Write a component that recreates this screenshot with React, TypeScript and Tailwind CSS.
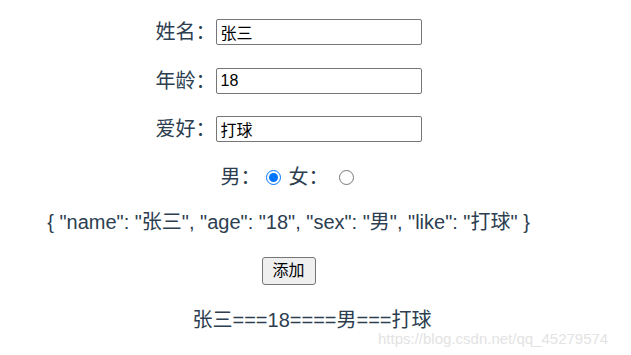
import { useState } from 'react';

const font = "font-['Liberation_Sans','Noto_Sans_CJK_SC',sans-serif]";

const Field = ( { label, value, className }: { label: string; value: string; className: string } ) => (
	<div className={ `flex justify-center items-center h-[26px] ${ className }` }>
		<span className="text-[20px] leading-[26px] w-[60px] text-left">{ label }</span>
		<input
			className="w-[206px] h-[26px] border border-[#767676] rounded-[2px] px-[4px] text-[16px] text-black bg-white outline-none"
			defaultValue={ value }
		/>
	</div>
);

export default function App() {
	const [ sex, setSex ] = useState( '男' );
	const person = { name: '张三', age: '18', sex, like: '打球' };

	return (
		<div className={ `relative w-[631px] h-[355px] bg-white text-[#2c3e50] ${ font }` }>
			<div className="w-[577px] flex flex-col pt-[19px]">
				<Field label="姓名：" value="张三" className="" />
				<Field label="年龄：" value="18" className="mt-[23px]" />
				<Field label="爱好：" value="打球" className="mt-[22px]" />

				<div className="mt-[25px] h-[20px] flex justify-center items-center text-[20px] leading-[20px]">
					<span className="w-[40px]">男：</span>
					<input
						type="radio"
						name="sex"
						checked={ sex === '男' }
						onChange={ () => setSex( '男' ) }
						className="ml-[5px] mr-[8px] w-[15px] h-[15px] accent-[#0075ff]"
					/>
					<span className="w-[40px]">女：</span>
					<input
						type="radio"
						name="sex"
						checked={ sex === '女' }
						onChange={ () => setSex( '女' ) }
						className="ml-[10px] mr-[3px] w-[15px] h-[15px]"
					/>
				</div>

				<div className="mt-[23px] h-[24px] text-center text-[20px] leading-[24px]">
					{ '{ "name": "' + person.name + '", "age": "' + person.age + '", "sex": "' + person.sex + '", "like": "' + person.like + '" }' }
				</div>

				<div className="mt-[23px] flex justify-center">
					<button className="w-[54px] h-[28px] border border-[#767676] rounded-[3px] bg-[#efefef] text-[16px] text-black leading-[26px]">
						添加
					</button>
				</div>

				<div className="mt-[23px] h-[24px] pl-[47px] text-center text-[20px] leading-[24px]">
					{ person.name }==={ person.age }===={ person.sex }==={ person.like }
				</div>
			</div>

			<span className="absolute left-[378px] top-[330px] text-[15px] leading-[17px] text-[#e3e3e3] font-['Liberation_Sans',sans-serif]">
				https://blog.csdn.net/qq_45279574
			</span>
		</div>
	);
}
